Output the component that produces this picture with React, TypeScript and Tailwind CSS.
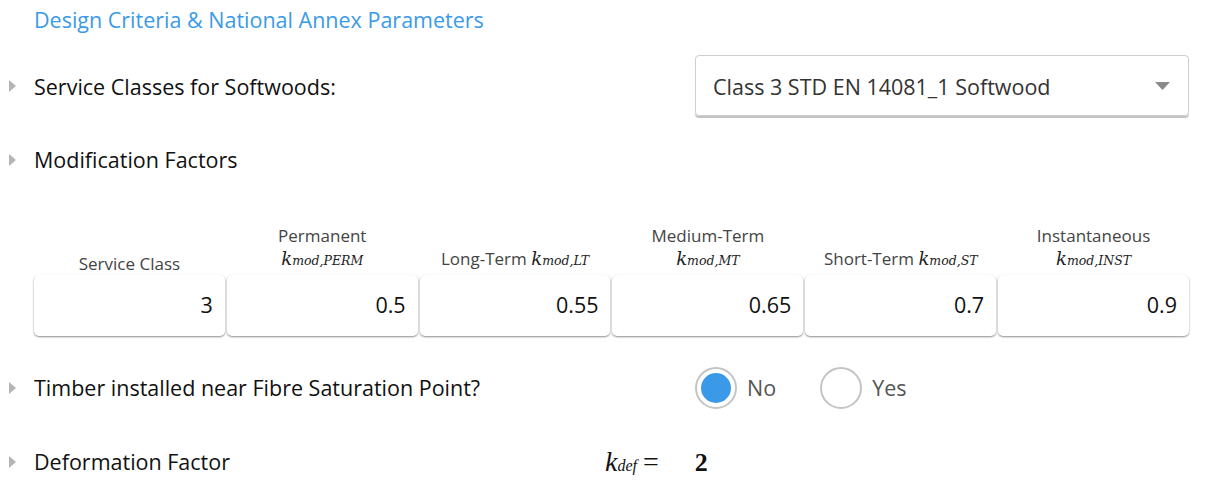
import React from 'react'

const sans = { fontFamily: '"Open Sans", "Noto Sans", Arial, sans-serif' }
const serif = { fontFamily: '"Liberation Serif", "DejaVu Serif", serif' }
const mathFont = { fontFamily: '"DejaVu Serif", "Liberation Serif", serif' }

function Caret() {
  return (
    <div className="w-[34px] flex justify-start pl-[9px]">
      <svg width="8" height="12" viewBox="0 0 8 12">
        <path d="M0 0 L7 6 L0 12 Z" fill="#b5b5b5" />
      </svg>
    </div>
  )
}

function K({ sub }: { sub: string }) {
  return (
    <span style={mathFont} className="italic text-[#222] whitespace-nowrap">
      <span className="text-[18px]">k</span>
      <span className="text-[12.5px]">{sub}</span>
    </span>
  )
}

const columns = [
  { top: null, label: 'Service Class', sub: null, inline: false, value: '3' },
  { top: 'Permanent', label: null, sub: 'mod,PERM', inline: false, value: '0.5' },
  { top: null, label: 'Long-Term', sub: 'mod,LT', inline: true, value: '0.55' },
  { top: 'Medium-Term', label: null, sub: 'mod,MT', inline: false, value: '0.65' },
  { top: null, label: 'Short-Term', sub: 'mod,ST', inline: true, value: '0.7' },
  { top: 'Instantaneous', label: null, sub: 'mod,INST', inline: false, value: '0.9' },
]

export default function App() {
  return (
    <div style={sans} className="w-[1220px] h-[488px] bg-white overflow-hidden">
      {/* Title */}
      <div className="h-[40px] flex items-center pl-[34px] text-[21.5px] text-[#3b9ae8]">
        Design Criteria &amp; National Annex Parameters
      </div>

      {/* Service classes */}
      <div className="mt-[15px] h-[61px] flex items-center">
        <Caret />
        <div className="w-[661px] pt-[3px] text-[21.5px] text-[#111]">Service Classes for Softwoods:</div>
        <div className="w-[494px] h-[61px] rounded-[4px] border border-[#cfcfcf] shadow-[0_2px_0_#c4c4c4] flex items-center justify-between pl-[17px] pr-[18px]">
          <span className="pt-[3px] text-[21.5px] text-[#333]">Class 3 STD EN 14081_1 Softwood</span>
          <svg width="15" height="8" viewBox="0 0 15 8">
            <path d="M0 0 L15 0 L7.5 8 Z" fill="#8a8a8a" />
          </svg>
        </div>
      </div>

      {/* Modification factors */}
      <div className="mt-[24px] h-[40px] flex items-center">
        <Caret />
        <div className="text-[21.5px] text-[#111]">Modification Factors</div>
      </div>

      <div className="ml-[34px] w-[1155px] mt-[40px] grid grid-cols-6 gap-x-[2px]">
        {columns.map((c, i) => (
          <div key={i} className="flex flex-col">
            <div className="h-[55px] flex flex-col items-center justify-end pb-[1px] text-[17px] text-[#444] leading-[26px]">
              {c.top && <div className="mb-[-3px]">{c.top}</div>}
              {c.top && <div><K sub={c.sub!} /></div>}
              {c.inline && (
                <div>
                  {c.label} <K sub={c.sub!} />
                </div>
              )}
              {!c.top && !c.inline && <div className="mb-[-3px]">{c.label}</div>}
            </div>
            <div className="h-[61px] rounded-[5px] shadow-[0_1px_2px_rgba(0,0,0,0.45)] flex items-center justify-end pr-[12px] text-[21.5px] text-[#111]">
              {c.value}
            </div>
          </div>
        ))}
      </div>

      {/* Fibre saturation */}
      <div className="mt-[31px] h-[42px] flex items-center">
        <Caret />
        <div className="w-[661px] text-[21.5px] text-[#111]">Timber installed near Fibre Saturation Point?</div>
        <div className="flex items-center">
          <div className="w-[42px] h-[42px] rounded-full border-2 border-[#c4c4c4] flex items-center justify-center">
            <div className="w-[30px] h-[30px] rounded-full bg-[#3b9ae8]" />
          </div>
          <span className="ml-[10px] text-[21.5px] text-[#555]">No</span>
          <div className="ml-[44px] w-[42px] h-[42px] rounded-full border-2 border-[#c4c4c4]" />
          <span className="ml-[10px] text-[21.5px] text-[#555]">Yes</span>
        </div>
      </div>

      {/* Deformation factor */}
      <div className="mt-[33px] h-[40px] flex items-center">
        <Caret />
        <div className="w-[571px] text-[21.5px] text-[#111]">Deformation Factor</div>
        <div style={serif} className="flex items-baseline text-[#111] whitespace-nowrap">
          <span className="italic text-[28px]">k</span>
          <span className="italic text-[16px]">def</span>
          <span className="text-[28px] ml-[6px]">=</span>
          <span className="text-[26px] font-bold ml-[36px]">2</span>
        </div>
      </div>
    </div>
  )
}
